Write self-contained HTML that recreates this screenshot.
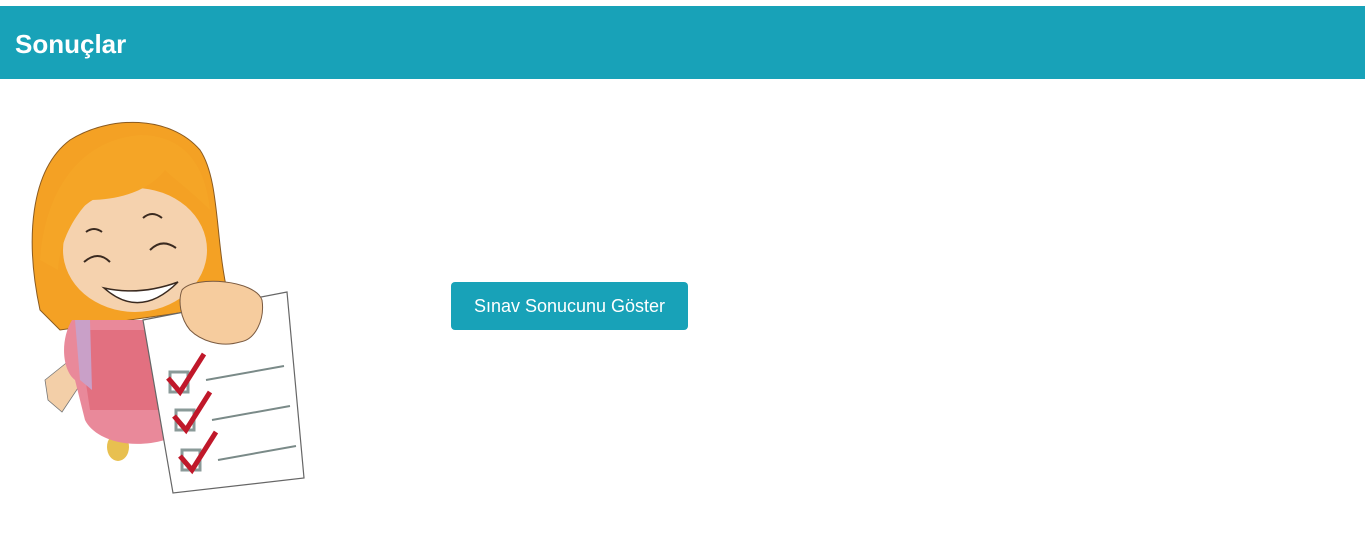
<!DOCTYPE html>
<html><head><meta charset="utf-8"><style>
html,body{margin:0;padding:0;background:#fff;width:1365px;height:535px;overflow:hidden;font-family:"Liberation Sans",sans-serif}
.hdr{position:absolute;left:0;top:6px;width:1365px;height:73px;background:#18a2b8}
.hdr h1{margin:0;position:absolute;left:15px;top:23px;color:#fff;font-size:26px;font-weight:bold;line-height:30px}
.btn{position:absolute;left:451px;top:282px;width:237px;height:48px;background:#18a2b8;border-radius:4px;color:#fff;font-size:18px;line-height:48px;text-align:center}
svg{position:absolute;left:0;top:0}
</style></head><body>
<div class="hdr"><h1>Sonuçlar</h1></div>
<svg width="340" height="535" viewBox="0 0 340 535">
<!-- hair back -->
<path d="M40,310 C25,240 30,170 70,140 C110,115 170,115 200,150 C220,180 215,240 228,295 L200,310 L60,330 Z" fill="#f4a124" stroke="#8a5a20" stroke-width="1"/>
<!-- leg/foot -->
<ellipse cx="118" cy="447" rx="11" ry="14" fill="#e8c050"/>
<!-- arm left -->
<path d="M70,360 L45,380 L48,400 L62,412 L80,385 Z" fill="#f3cfa8" stroke="#777" stroke-width="0.8"/>
<!-- dress -->
<path d="M72,320 C60,340 62,370 75,380 L85,420 C95,440 130,450 165,440 L175,360 L160,320 Z" fill="#e9899a"/>
<path d="M78,330 L165,330 L165,410 L90,410 Z" fill="#e27080"/>
<path d="M75,320 L90,320 L92,390 L80,380 Z" fill="#c9a0c8"/>
<!-- face -->
<ellipse cx="135" cy="250" rx="72" ry="62" fill="#f5d2ae"/>
<!-- hair fringe -->
<path d="M40,260 C45,190 80,140 140,135 C180,135 205,160 210,210 C190,190 175,180 165,170 C150,190 120,200 90,200 C75,215 60,240 58,270 Z" fill="#f5a526"/>
<!-- eyes -->
<path d="M84,262 Q98,250 110,262 M150,250 Q162,238 176,248 M143,218 Q152,210 162,218 M86,232 Q94,226 102,232" fill="none" stroke="#3a2a20" stroke-width="2"/>
<!-- mouth -->
<path d="M104,288 Q140,320 178,282 Q140,296 104,288 Z" fill="#fff" stroke="#3a2a20" stroke-width="1.5"/>
<!-- paper -->
<polygon points="143,320 287,292 304,478 173,493" fill="#fff" stroke="#666" stroke-width="1.2"/>
<!-- hand -->
<path d="M182,290 C195,275 255,280 262,300 C265,320 255,340 240,342 C220,348 200,340 190,330 C180,318 178,300 182,290 Z" fill="#f6cc9e" stroke="#7a5a40" stroke-width="1"/>
<!-- checks -->
<g fill="none">
<rect x="170" y="372" width="18" height="20" stroke="#8a9a98" stroke-width="3"/>
<rect x="176" y="410" width="18" height="20" stroke="#8a9a98" stroke-width="3"/>
<rect x="182" y="450" width="18" height="20" stroke="#8a9a98" stroke-width="3"/>
<path d="M168,378 L180,392 L204,354 M174,416 L186,430 L210,392 M180,456 L192,470 L216,432" stroke="#c0182a" stroke-width="5"/>
<path d="M206,380 L284,366 M212,420 L290,406 M218,460 L296,446" stroke="#7a8a88" stroke-width="2"/>
</g>
</svg>
<div class="btn">Sınav Sonucunu Göster</div>
</body></html>
